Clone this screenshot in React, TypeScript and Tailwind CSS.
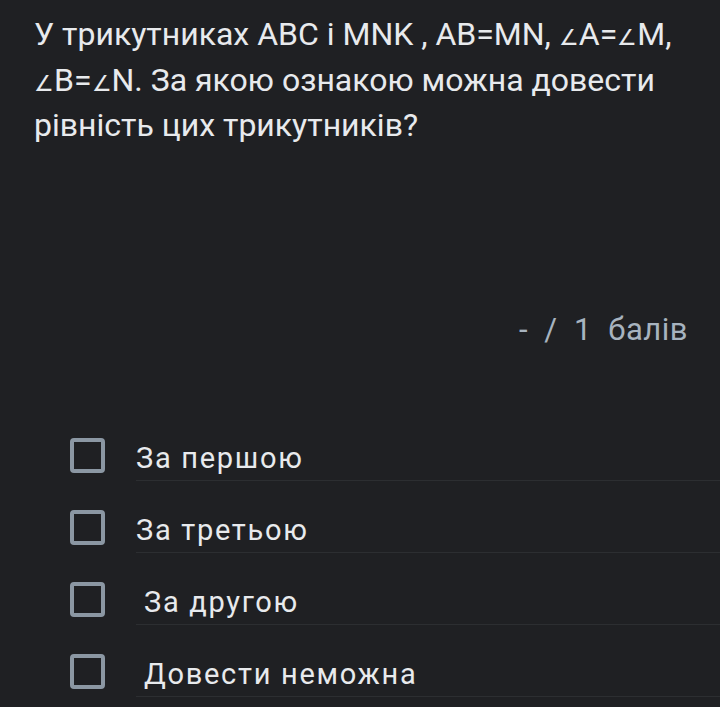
import React from "react";

const options = [
  { label: "За першою", indent: false },
  { label: "За третьою", indent: false },
  { label: "За другою", indent: true },
  { label: "Довести неможна", indent: true },
];

function Ang() {
  return <span className="text-[22px] leading-none">∠</span>;
}

export default function App() {
  return (
    <div
      className="w-[720px] h-[707px] overflow-hidden bg-[#1f2023] text-[#e8eaed]"
      style={{ fontFamily: "Roboto, 'Noto Sans', sans-serif" }}
    >
      <p className="pl-[34px] pt-[12px] text-[32px] leading-[45.5px]">
        У трикутниках ABC і MNK , AB=MN, <Ang />A=<Ang />M,
        <br />
        <Ang />B=<Ang />N. За якою ознакою можна довести
        <br />
        рівність цих трикутників?
      </p>

      <div className="mt-[163px] pr-[32px] text-right text-[31px] leading-[36px] text-[#a7b3bf] tracking-[0.5px]">
        -&nbsp;&nbsp;/&nbsp;&nbsp;1&nbsp;&nbsp;балів
      </div>

      <ul className="mt-[61px] pl-[70px]">
        {options.map((o) => (
          <li key={o.label} className="flex h-[72px] items-end">
            <div className="mb-[8px]">
              <span className="block h-[35px] w-[35px] rounded-[4px] border-[4px] border-[#8b97a3]" />
            </div>
            <div className="ml-[31px] flex h-full flex-1 items-end border-b border-[#2c2e31] pb-[6px]">
              <span className={`text-[29px] leading-[32px] tracking-[1.7px] ${o.indent ? "pl-[8px]" : ""}`}>{o.label}</span>
            </div>
          </li>
        ))}
      </ul>
    </div>
  );
}
